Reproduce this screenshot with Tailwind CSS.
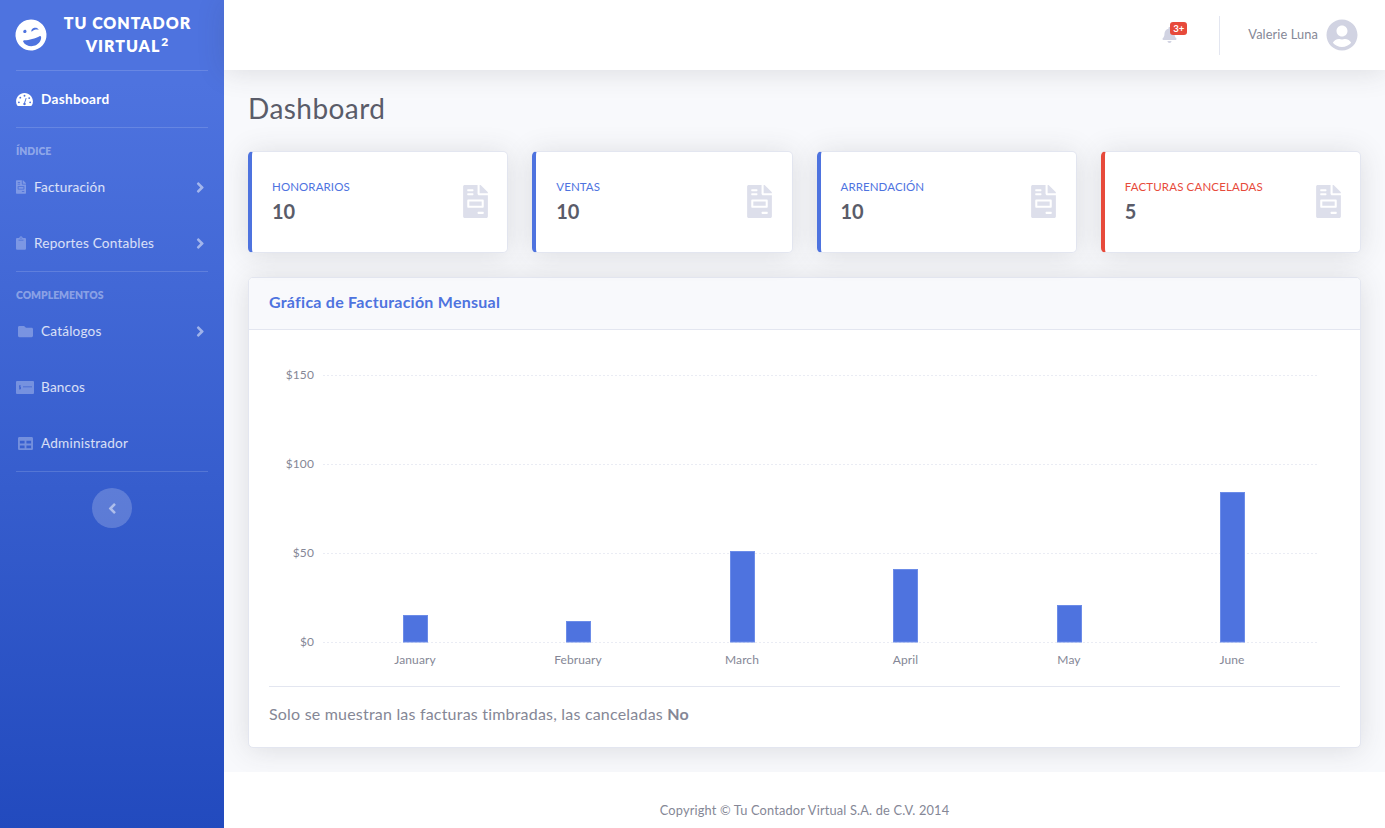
<!DOCTYPE html>
<html lang="es">

<head>
    <meta charset="UTF-8" />
    <meta name="viewport" content="width=device-width, initial-scale=1.0" />
    <script src="https://cdn.jsdelivr.net/npm/@tailwindcss/browser@4"></script>
    <title>Dashboard</title>
</head>

<body class="font-['Lato',sans-serif] bg-white">
    <div class="flex min-h-[828px] w-full">
        <!-- sidebar -->
        <aside class="w-56 shrink-0 px-4 bg-gradient-to-b from-[#4e73df] from-10% to-[#224abe] text-white">
            <div class="h-[70px] flex items-center">
                <svg viewBox="0 0 496 512" class="w-8 h-8 shrink-0 -rotate-[15deg] -ml-px text-white" fill="currentColor">
                    <path fill-rule="evenodd"
                        d="M248 8C111 8 0 119 0 256s111 248 248 248 248-111 248-248S385 8 248 8zM168 150c14.400 0 26 11.600 26 26s-11.600 26-26 26-26-11.600-26-26 11.600-26 26-26zm160 8c25.700 0 55.900 16.900 59.700 42.100.8 5.100-5.100 8.400-9.200 5.200-12.700-9.900-31.500-14.300-50.500-14.300s-37.800 4.400-50.500 14.300c-4.100 3.200-10-.1-9.200-5.200 3.800-25.200 34-42.100 59.700-42.100zM248 436c-62 0-138-42-148-108-2-12 10-22 21-18 31 10 79 14 127 14s96-4 127-14c11-4 23 6 21 18-10 66-86 108-148 108z" />
                </svg>
                <div class="flex-1 pb-0.5 text-center text-base leading-[23px] font-extrabold uppercase tracking-[0.95px]">Tu Contador Virtual<sup class="ml-px text-xs font-extrabold">2</sup></div>
            </div>
            <hr class="border-white/15" />

            <a class="h-14 flex items-center text-[13.6px] font-bold tracking-[0.3px]">
                <svg viewBox="0 0 576 512" class="w-[17px] h-[15px] mr-2" fill="currentColor">
                    <path fill-rule="evenodd"
                        d="M288 32C129 32 0 161 0 320c0 53 14 102 40 144 6 10 16 16 28 16h440c12 0 22-6 28-16 26-42 40-91 40-144C576 161 447 32 288 32zm0 64a32 32 0 1 1 0 64 32 32 0 0 1 0-64zM96 384a32 32 0 1 1 0-64 32 32 0 0 1 0 64zm48-160a32 32 0 1 1 0-64 32 32 0 0 1 0 64zm188 184c0 24-20 40-44 40s-44-16-44-40c0-20 14-37 32-42l50-150c3-8 11-13 20-10s13 11 10 20l-50 150c16 6 26 17 26 32zm84-200a32 32 0 1 1 64 0 32 32 0 0 1-64 0zm64 176a32 32 0 1 1 0-64 32 32 0 0 1 0 64z" />
                </svg>
                Dashboard
            </a>
            <hr class="border-white/15" />

            <div class="h-[31px] pt-4 text-[10.4px] leading-[15px] font-extrabold uppercase text-white/40">Índice</div>
            <a class="h-14 flex items-center text-[13.6px] tracking-[0.2px] text-white/80">
                <svg viewBox="0 0 384 512" class="w-2.5 h-[14px] mr-2 text-white/30" fill="currentColor">
                    <path
                        d="M288 256H96v64h192v-64zm89-151L279.1 7c-4.5-4.5-10.6-7-17-7H256v128h128v-6.1c0-6.3-2.5-12.4-7-16.9zm-153 31V0H24C10.7 0 0 10.7 0 24v464c0 13.3 10.7 24 24 24h336c13.3 0 24-10.7 24-24V160H248c-13.2 0-24-10.8-24-24zM64 72c0-4.42 3.58-8 8-8h80c4.42 0 8 3.58 8 8v16c0 4.42-3.58 8-8 8H72c-4.42 0-8-3.58-8-8V72zm0 64c0-4.42 3.58-8 8-8h80c4.42 0 8 3.58 8 8v16c0 4.42-3.58 8-8 8H72c-4.42 0-8-3.58-8-8v-16zm256 304c0 4.42-3.58 8-8 8h-80c-4.42 0-8-3.58-8-8v-16c0-4.42 3.58-8 8-8h80c4.42 0 8 3.58 8 8v16zm0-200v96c0 8.84-7.16 16-16 16H80c-8.84 0-16-7.16-16-16v-96c0-8.84 7.16-16 16-16h224c8.84 0 16 7.16 16 16z" />
                </svg>
                Facturación
                <svg viewBox="0 0 256 512" class="w-[8.5px] h-[17px] ml-auto mr-1 text-white/50" fill="currentColor">
                    <path
                        d="M224.3 273l-136 136c-9.4 9.4-24.6 9.4-33.9 0l-22.6-22.6c-9.4-9.4-9.4-24.6 0-33.9l96.4-96.4-96.4-96.4c-9.4-9.4-9.4-24.6 0-33.9L54.3 103c9.4-9.4 24.6-9.4 33.9 0l136 136c9.5 9.4 9.5 24.6.1 34z" />
                </svg>
            </a>
            <a class="h-14 flex items-center text-[13.6px] tracking-[0.2px] text-white/80">
                <svg viewBox="0 0 384 512" class="w-2.5 h-[14px] mr-2 text-white/30" fill="currentColor">
                    <path
                        d="M384 112v352c0 26.51-21.49 48-48 48H48c-26.51 0-48-21.49-48-48V112c0-26.51 21.49-48 48-48h80c0-35.29 28.71-64 64-64s64 28.71 64 64h80c26.51 0 48 21.49 48 48zM192 40c-13.255 0-24 10.745-24 24s10.745 24 24 24 24-10.745 24-24-10.745-24-24-24m96 114v-20a6 6 0 0 0-6-6H102a6 6 0 0 0-6 6v20a6 6 0 0 0 6 6h180a6 6 0 0 0 6-6z" />
                </svg>
                Reportes Contables
                <svg viewBox="0 0 256 512" class="w-[8.5px] h-[17px] ml-auto mr-1 text-white/50" fill="currentColor">
                    <path
                        d="M224.3 273l-136 136c-9.4 9.4-24.6 9.4-33.9 0l-22.6-22.6c-9.4-9.4-9.4-24.6 0-33.9l96.4-96.4-96.4-96.4c-9.4-9.4-9.4-24.6 0-33.9L54.3 103c9.4-9.4 24.6-9.4 33.9 0l136 136c9.5 9.4 9.5 24.6.1 34z" />
                </svg>
            </a>
            <hr class="border-white/15" />

            <div class="h-[31px] pt-4 text-[10.4px] leading-[15px] font-extrabold uppercase text-white/40">Complementos</div>
            <a class="h-14 flex items-center text-[13.6px] tracking-[0.2px] text-white/80">
                <svg viewBox="0 0 512 512" class="w-[15px] h-[15px] ml-0.5 mr-2 text-white/30" fill="currentColor">
                    <path
                        d="M464 128H272l-64-64H48C21.49 64 0 85.49 0 112v288c0 26.51 21.49 48 48 48h416c26.51 0 48-21.49 48-48V176c0-26.51-21.49-48-48-48z" />
                </svg>
                Catálogos
                <svg viewBox="0 0 256 512" class="w-[8.5px] h-[17px] ml-auto mr-1 text-white/50" fill="currentColor">
                    <path
                        d="M224.3 273l-136 136c-9.4 9.4-24.6 9.4-33.9 0l-22.6-22.6c-9.4-9.4-9.4-24.6 0-33.9l96.4-96.4-96.4-96.4c-9.4-9.4-9.4-24.6 0-33.9L54.3 103c9.4-9.4 24.6-9.4 33.9 0l136 136c9.5 9.4 9.5 24.6.1 34z" />
                </svg>
            </a>
            <a class="h-14 flex items-center text-[13.6px] tracking-[0.2px] text-white/80">
                <svg viewBox="0 0 18 13" class="w-[18px] h-[13px] mr-[7px] text-white/30" fill="currentColor">
                    <path fill-rule="evenodd" d="M1 0h16a1 1 0 0 1 1 1v11a1 1 0 0 1-1 1H1a1 1 0 0 1-1-1V1a1 1 0 0 1 1-1zm2.500 4v.7H3v2.100h1.500v.5H3v.7h.5v.8h.8v-.8H5V6.100H3.800v-.5H5v-.9h-.7V4zM7 5.500v.8h9v-.8z" />
                </svg>
                Bancos
            </a>
            <a class="h-14 flex items-center text-[13.6px] tracking-[0.2px] text-white/80">
                <svg viewBox="0 0 512 512" class="w-[15px] h-[15px] ml-0.5 mr-2 text-white/30" fill="currentColor">
                    <path
                        d="M464 32H48C21.49 32 0 53.49 0 80v352c0 26.51 21.49 48 48 48h416c26.51 0 48-21.49 48-48V80c0-26.51-21.49-48-48-48zM224 416H64v-96h160v96zm0-160H64v-96h160v96zm224 160H288v-96h160v96zm0-160H288v-96h160v96z" />
                </svg>
                Administrador
            </a>
            <hr class="border-white/15" />

            <button class="mt-4 mx-auto w-10 h-10 rounded-full bg-white/20 flex items-center justify-center text-white/50">
                <svg viewBox="0 0 256 512" class="w-[8.5px] h-[17px] rotate-180" fill="currentColor">
                    <path
                        d="M224.3 273l-136 136c-9.4 9.4-24.6 9.4-33.9 0l-22.6-22.6c-9.4-9.4-9.4-24.6 0-33.9l96.4-96.4-96.4-96.4c-9.4-9.4-9.4-24.6 0-33.9L54.3 103c9.4-9.4 24.6-9.4 33.9 0l136 136c9.5 9.4 9.5 24.6.1 34z" />
                </svg>
            </button>
        </aside>

        <div class="flex-1 min-w-0 flex flex-col bg-[#f8f9fc]">
            <!-- topbar -->
            <header class="relative h-[70px] shrink-0 bg-white flex items-center justify-end pr-[27px] shadow-[0_2px_28px_0_rgba(58,59,69,0.15)]">
                <div class="relative mr-[42px]">
                    <svg viewBox="0 0 448 512" class="w-[15px] h-4 text-[#d1d3e2]" fill="currentColor">
                        <path
                            d="M224 512c35.32 0 63.97-28.65 63.97-64H160.03c0 35.35 28.65 64 63.97 64zm215.39-149.71c-19.32-20.76-55.47-51.99-55.47-154.29 0-77.7-54.48-139.9-127.94-155.16V32c0-17.67-14.32-32-31.98-32s-31.98 14.33-31.98 32v20.84C118.56 68.1 64.08 130.3 64.08 208c0 102.3-36.15 133.53-55.47 154.29-6 6.45-8.66 14.16-8.61 21.71.11 16.4 12.98 32 32.1 32h383.8c19.12 0 32-15.6 32.1-32 .05-7.55-2.61-15.27-8.61-21.71z" />
                    </svg>
                    <span class="absolute -top-[5px] left-[8px] w-[17px] h-[13px] rounded-[3px] bg-[#e74a3b] text-white text-[9.6px] leading-[13px] font-bold text-center">3+</span>
                </div>
                <div class="w-px h-[39px] bg-[#e3e6f0] mr-[28px]"></div>
                <span class="text-[12.8px] tracking-[0.1px] text-[#858796] mr-2">Valerie Luna</span>
                <svg viewBox="0 0 496 512" class="w-8 h-8 text-[#d1d3e2]" fill="currentColor">
                    <path
                        d="M248 8C111 8 0 119 0 256s111 248 248 248 248-111 248-248S385 8 248 8zm0 96c48.6 0 88 39.4 88 88s-39.4 88-88 88-88-39.4-88-88 39.4-88 88-88zm0 344c-58.7 0-111.3-26.6-146.5-68.2 18.8-35.4 55.6-59.8 98.5-59.8 2.4 0 4.8.4 7.1 1.1 13 4.2 26.6 6.9 40.9 6.9 14.3 0 28-2.7 40.9-6.9 2.3-.7 4.7-1.1 7.1-1.1 42.9 0 79.7 24.4 98.5 59.8C359.3 421.4 306.7 448 248 448z" />
                </svg>
            </header>

            <main class="flex-1 px-6 pt-[21px] pb-6">
                <h1 class="text-[28px] leading-[34px] tracking-[0.45px] text-[#5a5c69] mb-[26px]">Dashboard</h1>

                <!-- stat cards -->
                <div class="grid grid-cols-4 gap-6 mb-6">
                    <div class="h-[102px] bg-white rounded-[5px] border border-[#e3e6f0] border-l-4 border-l-[#4e73df] shadow-[0_2px_28px_0_rgba(58,59,69,0.15)] pl-5 pr-[19.5px] flex items-center justify-between">
                        <div class="pb-px">
                            <div class="text-[11.5px] leading-[14px] tracking-[0.1px] uppercase text-[#4e73df] mb-[5px]">Honorarios</div>
                            <div class="text-xl leading-6 font-bold text-[#5a5c69]">10</div>
                        </div>
                        <svg viewBox="0 0 384 512" class="w-[25px] h-[33px] mb-0.5 text-[#dddfeb]" fill="currentColor">
                            <path
                                d="M288 256H96v64h192v-64zm89-151L279.1 7c-4.5-4.5-10.6-7-17-7H256v128h128v-6.1c0-6.3-2.5-12.4-7-16.9zm-153 31V0H24C10.7 0 0 10.7 0 24v464c0 13.3 10.7 24 24 24h336c13.3 0 24-10.7 24-24V160H248c-13.2 0-24-10.8-24-24zM64 72c0-4.42 3.58-8 8-8h80c4.42 0 8 3.58 8 8v16c0 4.42-3.58 8-8 8H72c-4.42 0-8-3.58-8-8V72zm0 64c0-4.42 3.58-8 8-8h80c4.42 0 8 3.58 8 8v16c0 4.42-3.58 8-8 8H72c-4.42 0-8-3.58-8-8v-16zm256 304c0 4.42-3.58 8-8 8h-80c-4.42 0-8-3.58-8-8v-16c0-4.42 3.58-8 8-8h80c4.42 0 8 3.58 8 8v16zm0-200v96c0 8.84-7.16 16-16 16H80c-8.84 0-16-7.16-16-16v-96c0-8.84 7.16-16 16-16h224c8.84 0 16 7.16 16 16z" />
                        </svg>
                    </div>
                    <div class="h-[102px] bg-white rounded-[5px] border border-[#e3e6f0] border-l-4 border-l-[#4e73df] shadow-[0_2px_28px_0_rgba(58,59,69,0.15)] pl-5 pr-[19.5px] flex items-center justify-between">
                        <div class="pb-px">
                            <div class="text-[11.5px] leading-[14px] tracking-[0.1px] uppercase text-[#4e73df] mb-[5px]">Ventas</div>
                            <div class="text-xl leading-6 font-bold text-[#5a5c69]">10</div>
                        </div>
                        <svg viewBox="0 0 384 512" class="w-[25px] h-[33px] mb-0.5 text-[#dddfeb]" fill="currentColor">
                            <path
                                d="M288 256H96v64h192v-64zm89-151L279.1 7c-4.5-4.5-10.6-7-17-7H256v128h128v-6.1c0-6.3-2.5-12.4-7-16.9zm-153 31V0H24C10.7 0 0 10.7 0 24v464c0 13.3 10.7 24 24 24h336c13.3 0 24-10.7 24-24V160H248c-13.2 0-24-10.8-24-24zM64 72c0-4.42 3.58-8 8-8h80c4.42 0 8 3.58 8 8v16c0 4.42-3.58 8-8 8H72c-4.42 0-8-3.58-8-8V72zm0 64c0-4.42 3.58-8 8-8h80c4.42 0 8 3.58 8 8v16c0 4.42-3.58 8-8 8H72c-4.42 0-8-3.58-8-8v-16zm256 304c0 4.42-3.58 8-8 8h-80c-4.42 0-8-3.58-8-8v-16c0-4.42 3.58-8 8-8h80c4.42 0 8 3.58 8 8v16zm0-200v96c0 8.84-7.16 16-16 16H80c-8.84 0-16-7.16-16-16v-96c0-8.84 7.16-16 16-16h224c8.84 0 16 7.16 16 16z" />
                        </svg>
                    </div>
                    <div class="h-[102px] bg-white rounded-[5px] border border-[#e3e6f0] border-l-4 border-l-[#4e73df] shadow-[0_2px_28px_0_rgba(58,59,69,0.15)] pl-5 pr-[19.5px] flex items-center justify-between">
                        <div class="pb-px">
                            <div class="text-[11.5px] leading-[14px] tracking-[0.1px] uppercase text-[#4e73df] mb-[5px]">Arrendación</div>
                            <div class="text-xl leading-6 font-bold text-[#5a5c69]">10</div>
                        </div>
                        <svg viewBox="0 0 384 512" class="w-[25px] h-[33px] mb-0.5 text-[#dddfeb]" fill="currentColor">
                            <path
                                d="M288 256H96v64h192v-64zm89-151L279.1 7c-4.5-4.5-10.6-7-17-7H256v128h128v-6.1c0-6.3-2.5-12.4-7-16.9zm-153 31V0H24C10.7 0 0 10.7 0 24v464c0 13.3 10.7 24 24 24h336c13.3 0 24-10.7 24-24V160H248c-13.2 0-24-10.8-24-24zM64 72c0-4.42 3.58-8 8-8h80c4.42 0 8 3.58 8 8v16c0 4.42-3.58 8-8 8H72c-4.42 0-8-3.58-8-8V72zm0 64c0-4.42 3.58-8 8-8h80c4.42 0 8 3.58 8 8v16c0 4.42-3.58 8-8 8H72c-4.42 0-8-3.58-8-8v-16zm256 304c0 4.42-3.58 8-8 8h-80c-4.42 0-8-3.58-8-8v-16c0-4.42 3.58-8 8-8h80c4.42 0 8 3.58 8 8v16zm0-200v96c0 8.84-7.16 16-16 16H80c-8.84 0-16-7.16-16-16v-96c0-8.84 7.16-16 16-16h224c8.84 0 16 7.16 16 16z" />
                        </svg>
                    </div>
                    <div class="h-[102px] bg-white rounded-[5px] border border-[#e3e6f0] border-l-4 border-l-[#e74a3b] shadow-[0_2px_28px_0_rgba(58,59,69,0.15)] pl-5 pr-[19.5px] flex items-center justify-between">
                        <div class="pb-px">
                            <div class="text-[11.5px] leading-[14px] tracking-[0.15px] uppercase text-[#e74a3b] mb-[5px]">Facturas Canceladas</div>
                            <div class="text-xl leading-6 font-bold text-[#5a5c69]">5</div>
                        </div>
                        <svg viewBox="0 0 384 512" class="w-[25px] h-[33px] mb-0.5 text-[#dddfeb]" fill="currentColor">
                            <path
                                d="M288 256H96v64h192v-64zm89-151L279.1 7c-4.5-4.5-10.6-7-17-7H256v128h128v-6.1c0-6.3-2.5-12.4-7-16.9zm-153 31V0H24C10.7 0 0 10.7 0 24v464c0 13.3 10.7 24 24 24h336c13.3 0 24-10.7 24-24V160H248c-13.2 0-24-10.8-24-24zM64 72c0-4.42 3.58-8 8-8h80c4.42 0 8 3.58 8 8v16c0 4.42-3.58 8-8 8H72c-4.42 0-8-3.58-8-8V72zm0 64c0-4.42 3.58-8 8-8h80c4.42 0 8 3.58 8 8v16c0 4.42-3.58 8-8 8H72c-4.42 0-8-3.58-8-8v-16zm256 304c0 4.42-3.58 8-8 8h-80c-4.42 0-8-3.58-8-8v-16c0-4.42 3.58-8 8-8h80c4.42 0 8 3.58 8 8v16zm0-200v96c0 8.84-7.16 16-16 16H80c-8.84 0-16-7.16-16-16v-96c0-8.84 7.16-16 16-16h224c8.84 0 16 7.16 16 16z" />
                        </svg>
                    </div>
                </div>

                <!-- chart card -->
                <div class="bg-white rounded-[5px] border border-[#e3e6f0] shadow-[0_2px_28px_0_rgba(58,59,69,0.15)] overflow-hidden">
                    <div class="h-[52px] px-5 pb-1 flex items-center bg-[#f8f9fc] border-b border-[#e3e6f0] text-base tracking-[0.25px] font-bold text-[#4e73df]">Gráfica de Facturación Mensual</div>
                    <div class="px-5 pt-5 pb-[21px]">
                        <svg width="1071" height="336" viewBox="0 0 1071 336" class="block font-['Lato',sans-serif] text-[12px] tracking-[0.1px]" fill="#858796">
                            <g stroke="#eaecf4" stroke-dasharray="2 2">
                                <line x1="54" x2="1048" y1="25.500" y2="25.500" />
                                <line x1="54" x2="1048" y1="114.500" y2="114.500" />
                                <line x1="54" x2="1048" y1="203.500" y2="203.500" />
                                <line x1="54" x2="1048" y1="292.500" y2="292.500" />
                            </g>
                            <g text-anchor="end">
                                <text x="45" y="29">$150</text>
                                <text x="45" y="118">$100</text>
                                <text x="45" y="207">$50</text>
                                <text x="45" y="296">$0</text>
                            </g>
                            <g fill="#4e73df" stroke="#6c8ce8">
                                <rect x="134.500" y="265.500" width="24" height="26.500" />
                                <rect x="297.500" y="271.500" width="24" height="20.500" />
                                <rect x="461.500" y="201.500" width="24" height="90.500" />
                                <rect x="624.500" y="219.500" width="24" height="72.500" />
                                <rect x="788.500" y="255.500" width="24" height="36.500" />
                                <rect x="951.500" y="142.500" width="24" height="149.500" />
                            </g>
                            <g text-anchor="middle">
                                <text x="146" y="314">January</text>
                                <text x="309" y="314">February</text>
                                <text x="473" y="314">March</text>
                                <text x="636.500" y="314">April</text>
                                <text x="800" y="314">May</text>
                                <text x="963" y="314">June</text>
                            </g>
                        </svg>
                        <hr class="border-[#e3e6f0] mt-0" />
                        <p class="mt-[15px] h-6 leading-6 text-base tracking-[0.2px] text-[#858796]">Solo se muestran las facturas timbradas, las canceladas <b>No</b></p>
                    </div>
                </div>
            </main>

            <footer class="h-[57px] shrink-0 bg-white flex items-center justify-center pt-[21px] text-[12.8px] tracking-[0.17px] text-[#858796]">Copyright © Tu Contador Virtual S.A. de C.V. 2014</footer>
        </div>
    </div>
</body>

</html>
